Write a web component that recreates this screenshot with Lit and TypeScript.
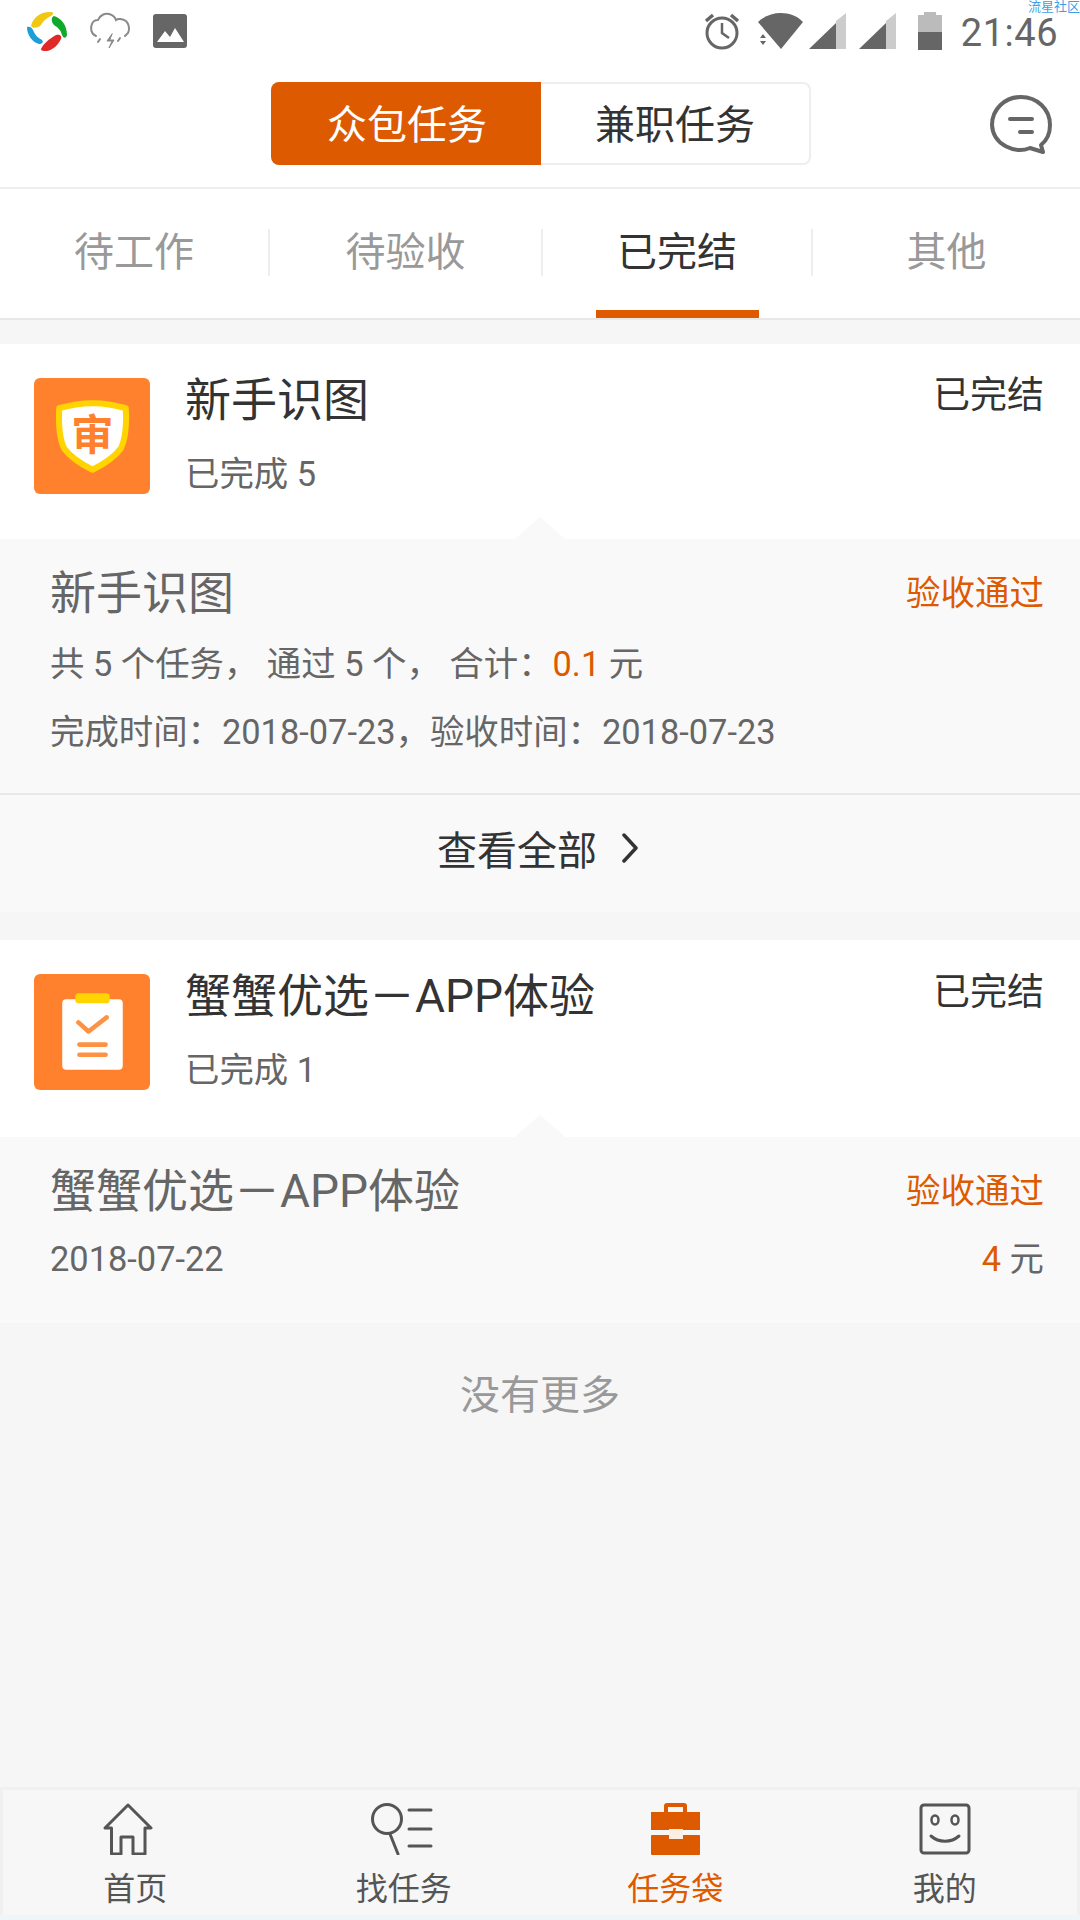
import { LitElement, html, css, svg } from 'lit';
import { customElement } from 'lit/decorators.js';

const logoIcon = html`<svg width="40" height="40" viewBox="0 0 40 40">
  <path d="M4 15C6 6 14 0 25 1c2 1 1 3-1 4-4 2-7 4-10 9-3 3-8 4-10 1z" fill="#f0c814" />
  <path d="M27 5c7 2 13 9 13 19-1 4-4 3-5 0-1-4-3-7-8-10-3-3-3-8 0-9z" fill="#12a82c" />
  <path d="M0 16c3-1 5 1 6 3 2 5 5 8 9 10 2 2 0 4-3 4C5 31 0 24 0 16z" fill="#1c9ed8" />
  <path d="M14 38c2-5 8-10 15-14 4-1 6 1 5 4-3 6-8 11-14 12-3 0-6 0-6-2z" fill="#e02a2a" />
</svg>`;

const cloudIcon = html`<svg width="42" height="42" viewBox="0 0 42 42" fill="none" stroke="#8a8a8a" stroke-width="2" stroke-linecap="round">
  <path d="M7 26C2 24 1 18 3 14c1-3 4-4 6-4 2-5 7-7 11-6 4 1 6 3 7 6 2-2 7-1 10 1 3 3 4 8 2 12l-3 3" />
  <path d="M11 29l-2 3M31 28l-2 3" />
  <path d="M23 24l-5 7h5l-3 7 5-8h-4z" fill="#8a8a8a" stroke-width="1" />
</svg>`;

const imageIcon = html`<svg width="34" height="34" viewBox="0 0 34 34">
  <rect width="34" height="34" rx="3" fill="#666" />
  <path d="M4 28l8-11 5 6 5-9 9 14z" fill="#fff" />
</svg>`;

const alarmIcon = html`<svg width="38" height="38" viewBox="0 0 38 38" fill="none" stroke="#666" stroke-width="3">
  <circle cx="19" cy="21" r="15" />
  <path d="M19 11v10l7 5" stroke-width="2.5" />
  <path d="M3 9l7-6M35 9l-7-6" stroke-width="3.5" />
</svg>`;

const wifiIcon = html`<svg width="46" height="36" viewBox="0 0 46 36">
  <path d="M0 9C12-3 34-3 45 9L23 36z" fill="#666" />
  <path d="M2 25l3-4 3 4zM2 28l3 4 3-4z" fill="#666" />
</svg>`;

const signalIcon = html`<svg width="37" height="36" viewBox="0 0 37 36">
  <path d="M37 0v36H27V8z" fill="#ccc" />
  <path d="M27 10v26H0z" fill="#666" />
</svg>`;

const batteryIcon = html`<svg width="24" height="38" viewBox="0 0 24 38">
  <path d="M6 0h12v3h6v17H0V3h6z" fill="#bbb" />
  <rect y="20" width="24" height="18" fill="#666" />
</svg>`;

const chatIcon = html`<svg width="62" height="60" viewBox="0 0 62 60" fill="none" stroke="#666" stroke-width="4" stroke-linecap="round">
  <path d="M40 53C25 59 3 50 2 30 2 14 15 2 31 2s29 12 29 28c0 9-4 16-9 20l2 7z" stroke-linejoin="round" />
  <path d="M20 24h22M30 37h12" />
</svg>`;

const chevronIcon = html`<svg width="18" height="30" viewBox="0 0 18 30" fill="none" stroke="#333" stroke-width="3.5" stroke-linecap="round" stroke-linejoin="round">
  <path d="M3 2l12 13L3 28" />
</svg>`;

const shieldIcon = html`<svg width="116" height="116" viewBox="0 0 115 115">
  <rect width="115" height="115" rx="6" fill="#ff812e" />
  <path d="M25 30c10-3 21-5 33-5s23 2 33 5c1 20-1 32-5 40-6 8-16 15-28 21-12-6-22-13-28-21-4-8-6-20-5-40z" fill="#fff" stroke="#ffd400" stroke-width="6" stroke-linejoin="round" />
  <text x="58" y="71" text-anchor="middle" class="shield-text">审</text>
</svg>`;

const clipIcon = html`<svg width="116" height="116" viewBox="0 0 115 115">
  <rect width="115" height="115" rx="6" fill="#ff812e" />
  <rect x="28" y="25" width="60" height="70" rx="4" fill="#fff" />
  <rect x="41" y="19" width="34" height="10" rx="3" fill="#ffd400" />
  <path d="M44 48l10 9 18-14" fill="none" stroke="#ff9142" stroke-width="4.500" stroke-linecap="round" stroke-linejoin="round" />
  <path d="M45 70h26M45 80h26" stroke="#ff9142" stroke-width="4.500" stroke-linecap="round" />
</svg>`;

const navIcons = {
  home: svg`<path d="M8.500 25H2L25 2l23 23h-6v26H30V34H18v17H8.500z" fill="none" stroke="#555" stroke-width="3" stroke-linejoin="round" />`,
  find: svg`<circle cx="16" cy="16" r="14.500" fill="none" stroke="#555" stroke-width="3" />
    <path d="M19 31l8 20M38 7h22M38 26h22M38 43h22" stroke="#555" stroke-width="3" fill="none" stroke-linecap="round" />`,
  bag: svg`<path d="M13 9V3a3 3 0 0 1 3-3h17a3 3 0 0 1 3 3v6h13v18H0V9zM17 4v5h15V4z" fill="#dd5a00" fill-rule="evenodd" />
    <rect y="32" width="49" height="20" rx="1" fill="#dd5a00" />
    <rect x="18" y="26" width="14" height="10" fill="#fbeee3" />`,
  me: svg`<rect x="2" y="2" width="48" height="48" rx="3" fill="none" stroke="#555" stroke-width="3" />
    <ellipse cx="16" cy="17" rx="3.500" ry="4.500" fill="none" stroke="#555" stroke-width="2.500" />
    <ellipse cx="36" cy="17" rx="3.500" ry="4.500" fill="none" stroke="#555" stroke-width="2.500" />
    <path d="M12 33c8 7 20 7 28 0" fill="none" stroke="#555" stroke-width="3" stroke-linecap="round" />`,
};

const tabs = ['待工作', '待验收', '已完结', '其他'];

const navItems = [
  { key: 'home', label: '首页', w: 50 },
  { key: 'find', label: '找任务', w: 62 },
  { key: 'bag', label: '任务袋', w: 49, on: true },
  { key: 'me', label: '我的', w: 52 },
];

@customElement('app-root')
export class AppRoot extends LitElement {
  static styles = css`
    :host {
      display: flex;
      flex-direction: column;
      height: 1920px;
      background: #f6f6f6;
      font-family: Roboto, 'Noto Sans CJK SC', sans-serif;
      color: #333;
      position: relative;
    }
    svg {
      display: block;
      flex: none;
    }
    .shield-text {
      font: 700 42px 'Noto Sans CJK SC', sans-serif;
      fill: #ff812e;
    }
    .watermark {
      position: absolute;
      top: 0;
      right: 0;
      font-size: 13px;
      line-height: 13px;
      color: #3f9fe6;
    }
    .status {
      height: 70px;
      background: #fff;
      display: flex;
      align-items: center;
      padding: 0 22px 8px 27px;
      box-sizing: border-box;
    }
    .status-left {
      display: flex;
      align-items: center;
      gap: 22px;
      flex: 1;
    }
    .status-right {
      display: flex;
      align-items: center;
    }
    .status-right .wifi {
      margin: 0 5px 0 17px;
    }
    .status-right .sig2 {
      margin: 0 22px 0 13px;
    }
    .time {
      font-size: 38px;
      line-height: 30px;
      color: #666;
      margin: 4px 0 0 19px;
      letter-spacing: 0.5px;
    }
    .header {
      height: 105px;
      background: #fff;
      display: grid;
      grid-template-columns: 271px 540px 1fr;
      padding-top: 12px;
      border-bottom: 2px solid #eee;
    }
    .toggle {
      grid-column: 2;
      height: 83px;
      display: grid;
      grid-template-columns: 1fr 1fr;
      font-size: 40px;
    }
    .toggle div {
      display: flex;
      align-items: center;
      justify-content: center;
      box-sizing: border-box;
      padding-bottom: 4px;
    }
    .toggle .on {
      background: #dd5a00;
      color: #fff;
      border-radius: 8px 0 0 8px;
      padding-left: 2px;
    }
    .toggle .off {
      border: 2px solid #eee;
      border-left: none;
      border-radius: 0 8px 8px 0;
    }
    .chat {
      justify-self: end;
      margin: 13px 28px 0 0;
    }
    .tabs {
      height: 129px;
      background: #fff;
      display: grid;
      grid-template-columns: 270px 273px 270px 267px;
      border-bottom: 2px solid #e8e8e8;
    }
    .tab {
      position: relative;
      display: flex;
      align-items: flex-start;
      padding-top: 40px;
      font-size: 40px;
      color: #999;
    }
    .tab span {
      flex: 1;
      height: 47px;
      line-height: 47px;
      text-align: center;
      border-right: 2px solid #eee;
    }
    .tab:last-child span {
      border-right: none;
    }
    .tab.on {
      color: #333;
    }
    .tab.on::after {
      content: '';
      position: absolute;
      left: 53px;
      right: 54px;
      bottom: 0;
      height: 8px;
      background: #dd5a00;
    }
    .main {
      flex: 1;
      padding-top: 24px;
    }
    .head {
      background: #fff;
      display: flex;
      box-sizing: border-box;
      height: 195px;
      padding: 34px 36px 0 34px;
    }
    .head.tall {
      height: 197px;
    }
    .info {
      flex: 1;
      margin: -6px 0 0 35px;
    }
    .title {
      font-size: 46px;
      line-height: 56px;
    }
    .sub {
      font-size: 34.4px;
      line-height: 44px;
      color: #666;
      margin-top: 24px;
    }
    .state {
      font-size: 37px;
      line-height: 44px;
      margin-top: -4px;
    }
    .tall .state {
      margin-top: -3px;
    }
    .detail {
      position: relative;
      background: #f9f9f9;
    }
    .detail::before {
      content: '';
      position: absolute;
      left: 515px;
      top: -22px;
      border: 25px solid transparent;
      border-top: none;
      border-bottom: 22px solid #f9f9f9;
    }
    .body {
      padding: 26px 36px 0 50px;
    }
    .row {
      display: flex;
      justify-content: space-between;
      align-items: center;
    }
    .row .title {
      color: #666;
    }
    .pass {
      font-size: 34.5px;
      line-height: 44px;
      color: #dd5a00;
    }
    .line {
      font-size: 34.4px;
      line-height: 44px;
      color: #666;
      margin-top: 21px;
      white-space: pre;
    }
    .line + .line {
      margin-top: 24px;
    }
    .meta {
      margin-top: 18px;
    }
    .meta .line {
      margin-top: 0;
    }
    .em {
      color: #dd5a00;
    }
    .more {
      height: 119px;
      box-sizing: border-box;
      border-top: 2px solid #e8e8e8;
      margin-top: 39px;
      padding: 0 4px 11px 0;
      display: flex;
      align-items: center;
      justify-content: center;
      gap: 24px;
      font-size: 40px;
    }
    .gap {
      height: 28px;
    }
    .body.short {
      padding-bottom: 42px;
    }
    .end {
      text-align: center;
      font-size: 40px;
      line-height: 56px;
      color: #999;
      margin-top: 45px;
    }
    .nav {
      display: grid;
      grid-template-columns: repeat(4, 1fr);
      height: 128px;
      box-sizing: border-box;
      background: #f7f7f7;
      border: 3px solid #f0f0f0;
      border-bottom: none;
    }
    .nav-item {
      display: flex;
      flex-direction: column;
      align-items: center;
      padding: 13px 0 0 2px;
      font-size: 32px;
      line-height: 44px;
      color: #555;
    }
    .nav-item svg {
      margin-bottom: 12px;
    }
    .nav-item.home,
    .nav-item.find {
      padding: 13px 4px 0 0;
    }
    .nav-item.home svg {
      margin-right: 14px;
    }
    .nav-item.find svg {
      margin-right: 4px;
    }
    .nav-item.me {
      padding-left: 4px;
    }
    .nav-item.bag {
      color: #dd5a00;
    }
    .strip {
      height: 5px;
      background: #eef6fa;
    }
  `;

  renderHead(icon: unknown, title: string, sub: string, tall = false) {
    return html`
      <div class="head ${tall ? 'tall' : ''}">
        ${icon}
        <div class="info">
          <div class="title">${title}</div>
          <div class="sub">${sub}</div>
        </div>
        <div class="state">已完结</div>
      </div>
    `;
  }

  render() {
    return html`
      <div class="watermark">流星社区</div>
      <div class="status">
        <div class="status-left">${logoIcon}${cloudIcon}${imageIcon}</div>
        <div class="status-right">
          ${alarmIcon}
          <span class="wifi">${wifiIcon}</span>
          ${signalIcon}
          <span class="sig2">${signalIcon}</span>
          ${batteryIcon}
          <span class="time">21:46</span>
        </div>
      </div>
      <div class="header">
        <div class="toggle">
          <div class="on">众包任务</div>
          <div class="off">兼职任务</div>
        </div>
        <div class="chat">${chatIcon}</div>
      </div>
      <div class="tabs">
        ${tabs.map(
          (t, i) => html`<div class="tab ${i === 2 ? 'on' : ''}"><span>${t}</span></div>`
        )}
      </div>
      <div class="main">
        ${this.renderHead(shieldIcon, '新手识图', '已完成 5')}
        <div class="detail">
          <div class="body">
            <div class="row">
              <div class="title">新手识图</div>
              <div class="pass">验收通过</div>
            </div>
            <div class="line">共 5 个任务， 通过 5 个， 合计：<span class="em">0.1</span> 元</div>
            <div class="line">完成时间：2018-07-23，验收时间：2018-07-23</div>
          </div>
          <div class="more">查看全部 ${chevronIcon}</div>
        </div>
        <div class="gap"></div>
        ${this.renderHead(clipIcon, '蟹蟹优选－APP体验', '已完成 1', true)}
        <div class="detail">
          <div class="body short">
            <div class="row">
              <div class="title">蟹蟹优选－APP体验</div>
              <div class="pass">验收通过</div>
            </div>
            <div class="row meta">
              <div class="line">2018-07-22</div>
              <div class="line"><span class="em">4</span> 元</div>
            </div>
          </div>
        </div>
        <div class="end">没有更多</div>
      </div>
      <div class="nav">
        ${navItems.map(
          (n) => html`
            <div class="nav-item ${n.key}">
              <svg width=${n.w} height="52" viewBox="0 0 ${n.w} 52">
                ${navIcons[n.key as keyof typeof navIcons]}
              </svg>
              ${n.label}
            </div>
          `
        )}
      </div>
      <div class="strip"></div>
    `;
  }
}
